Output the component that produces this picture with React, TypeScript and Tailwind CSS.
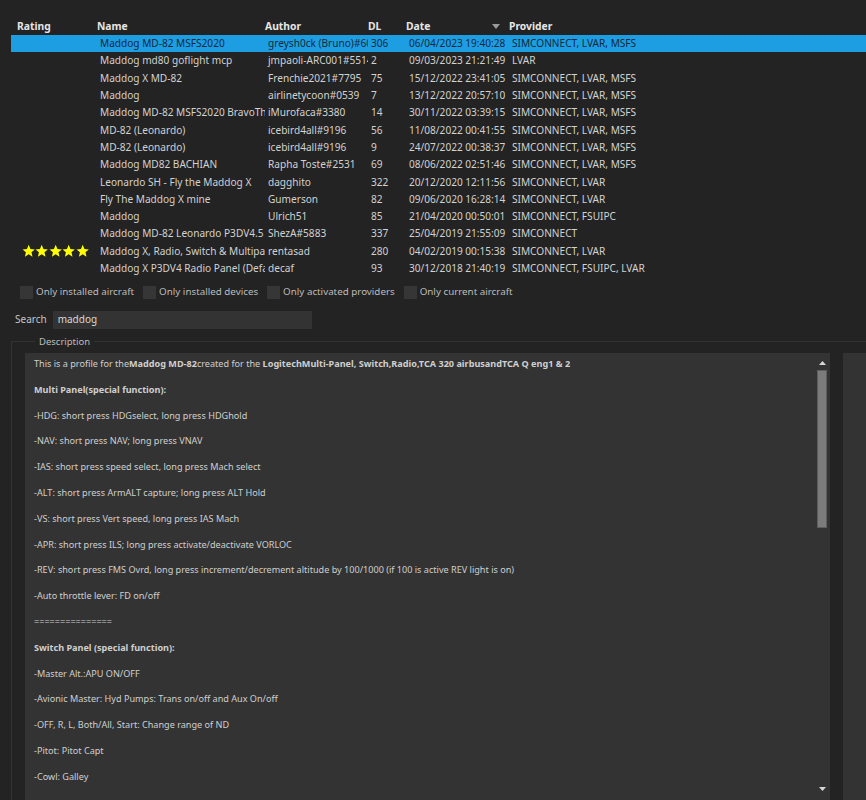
import React from "react";

type Row = {
  name: string;
  author: string;
  dl: string;
  date: string;
  provider: string;
  stars?: boolean;
};

const rows: Row[] = [
  { name: "Maddog MD-82 MSFS2020", author: "greysh0ck (Bruno)#6054", dl: "306", date: "06/04/2023 19:40:28", provider: "SIMCONNECT, LVAR, MSFS" },
  { name: "Maddog md80 goflight mcp", author: "jmpaoli-ARC001#5514", dl: "2", date: "09/03/2023 21:21:49", provider: "LVAR" },
  { name: "Maddog X MD-82", author: "Frenchie2021#7795", dl: "75", date: "15/12/2022 23:41:05", provider: "SIMCONNECT, LVAR, MSFS" },
  { name: "Maddog", author: "airlinetycoon#0539", dl: "7", date: "13/12/2022 20:57:10", provider: "SIMCONNECT, LVAR, MSFS" },
  { name: "Maddog MD-82 MSFS2020 BravoThrottle", author: "iMurofaca#3380", dl: "14", date: "30/11/2022 03:39:15", provider: "SIMCONNECT, LVAR, MSFS" },
  { name: "MD-82 (Leonardo)", author: "icebird4all#9196", dl: "56", date: "11/08/2022 00:41:55", provider: "SIMCONNECT, LVAR, MSFS" },
  { name: "MD-82 (Leonardo)", author: "icebird4all#9196", dl: "9", date: "24/07/2022 00:38:37", provider: "SIMCONNECT, LVAR, MSFS" },
  { name: "Maddog MD82 BACHIAN", author: "Rapha Toste#2531", dl: "69", date: "08/06/2022 02:51:46", provider: "SIMCONNECT, LVAR, MSFS" },
  { name: "Leonardo SH - Fly the Maddog X", author: "dagghito", dl: "322", date: "20/12/2020 12:11:56", provider: "SIMCONNECT, LVAR" },
  { name: "Fly The Maddog X mine", author: "Gumerson", dl: "82", date: "09/06/2020 16:28:14", provider: "SIMCONNECT, LVAR" },
  { name: "Maddog", author: "Ulrich51", dl: "85", date: "21/04/2020 00:50:01", provider: "SIMCONNECT, FSUIPC" },
  { name: "Maddog MD-82 Leonardo P3DV4.5", author: "ShezA#5883", dl: "337", date: "25/04/2019 21:55:09", provider: "SIMCONNECT" },
  { name: "Maddog X, Radio, Switch & Multipanel", author: "rentasad", dl: "280", date: "04/02/2019 00:15:38", provider: "SIMCONNECT, LVAR", stars: true },
  { name: "Maddog X P3DV4 Radio Panel (Default)", author: "decaf", dl: "93", date: "30/12/2018 21:40:19", provider: "SIMCONNECT, FSUIPC, LVAR" },
];

const lines: { text: React.ReactNode; bold?: boolean }[] = [
  {
    text: (
      <>
        This is a profile for the<b>Maddog MD-82</b>created for the{" "}
        <b>LogitechMulti-Panel, Switch,Radio,TCA 320 airbusandTCA Q eng1 &amp; 2</b>
      </>
    ),
  },
  { text: "Multi Panel(special function):", bold: true },
  { text: "-HDG: short press HDGselect, long press HDGhold" },
  { text: "-NAV: short press NAV; long press VNAV" },
  { text: "-IAS: short press speed select, long press Mach select" },
  { text: "-ALT: short press ArmALT capture; long press ALT Hold" },
  { text: "-VS: short press Vert speed, long press IAS Mach" },
  { text: "-APR: short press ILS; long press activate/deactivate VORLOC" },
  { text: "-REV: short press FMS Ovrd, long press increment/decrement altitude by 100/1000 (if 100 is active REV light is on)" },
  { text: "-Auto throttle lever: FD on/off" },
  { text: "===============" },
  { text: "Switch Panel (special function):", bold: true },
  { text: "-Master Alt.:APU ON/OFF" },
  { text: "-Avionic Master: Hyd Pumps: Trans on/off and Aux On/off" },
  { text: "-OFF, R, L, Both/All, Start: Change range of ND" },
  { text: "-Pitot: Pitot Capt" },
  { text: "-Cowl: Galley" },
];

const cols = "grid grid-cols-[86px_168px_103px_38px_103px_1fr]";

function Star() {
  return (
    <svg width="13.4" height="14" viewBox="0 0 24 25">
      <polygon
        points="12,1.5 15.1,8.9 23,9.6 17,14.8 18.8,22.6 12,18.5 5.2,22.6 7,14.8 1,9.6 8.9,8.9"
        fill="#ffff00"
      />
    </svg>
  );
}

function Cell({ children }: { children: React.ReactNode }) {
  return <div className="overflow-hidden whitespace-nowrap pl-[3px] pr-[5px]">{children}</div>;
}

function Check({ label }: { label: string }) {
  return (
    <label className="flex items-center gap-[3px]">
      <span className="h-[13px] w-[13px] bg-[#363636]" />
      <span>{label}</span>
    </label>
  );
}

export default function App() {
  return (
    <div
      className="flex h-[800px] w-full flex-col overflow-hidden bg-[#232323] text-[10px] text-[#d2d2d2]"
      style={{ fontFamily: '"Noto Sans", "Open Sans", sans-serif' }}
    >
      {/* profile list */}
      <div className="pl-[11px] pt-[18px]">
        <div className={`${cols} h-[17px] items-center text-[10.3px] font-bold text-[#e6e6e6]`}>
          <div className="pl-[6px]">Rating</div>
          <div>Name</div>
          <div>Author</div>
          <div>DL</div>
          <div className="relative">
            Date
            <svg className="absolute right-[9px] top-[5px]" width="8" height="5" viewBox="0 0 8 5">
              <polygon points="0,0 8,0 4,5" fill="#9a9a9a" />
            </svg>
          </div>
          <div>Provider</div>
        </div>
        {rows.map((r, idx) => (
          <div
            key={idx}
            className={`${cols} h-[17.3px] items-center text-[10.1px] leading-[17px] ${
              idx === 0 ? "bg-[#1d9ee2] text-[#14283a]" : ""
            }`}
          >
            <div className="flex items-center pl-[11px]">
              {r.stars && (
                <>
                  <Star />
                  <Star />
                  <Star />
                  <Star />
                  <Star />
                </>
              )}
            </div>
            <Cell>{r.name}</Cell>
            <Cell>{r.author}</Cell>
            <Cell>{r.dl}</Cell>
            <Cell>{r.date}</Cell>
            <Cell>{r.provider}</Cell>
          </div>
        ))}
      </div>

      {/* filters */}
      <div className="mt-[8px] flex items-center gap-[9px] pl-[20px] text-[9.8px] text-[#bcbcbc]">
        <Check label="Only installed aircraft" />
        <Check label="Only installed devices" />
        <Check label="Only activated providers" />
        <Check label="Only current aircraft" />
      </div>

      {/* search */}
      <div className="mt-[11px] flex items-center gap-[6px] pl-[15px] text-[#c4c4c4]">
        <span>Search</span>
        <div className="flex h-[18px] w-[259px] items-center bg-[#333333] pl-[5px] text-[#d8d8d8]">maddog</div>
      </div>

      {/* description */}
      <fieldset className="mt-[6px] ml-[11px] min-h-0 flex-1 border-l border-t border-[#333333] pl-[13px]">
        <legend className="ml-[10px] px-[4px] text-[9.5px] text-[#bdbdbd]">Description</legend>
        <div className="mt-[4px] flex h-full gap-[13px]">
          <div className="relative flex h-full w-[805px] shrink-0 bg-[#333333]">
            <div className="flex-1 pl-[9px] pt-[4px] text-[9.1px] text-[#cfcfcf]">
              {lines.map((l, i) => (
                <p key={i} className={`mb-[12.8px] whitespace-nowrap leading-[13px] ${l.bold ? "font-bold" : ""}`}>
                  {l.text}
                </p>
              ))}
            </div>
            <div className="flex w-[16px] flex-col items-center pt-[8px]">
              <svg width="7" height="4" viewBox="0 0 7 4">
                <polygon points="0,4 7,4 3.5,0" fill="#d8d8d8" />
              </svg>
              <div className="mt-[5px] h-[158px] w-[10px] border border-[#5e5e5e] bg-[#7b7b7b]" />
              <div className="flex-1" />
              <svg className="mb-[13px]" width="7" height="4" viewBox="0 0 7 4">
                <polygon points="0,0 7,0 3.5,4" fill="#d8d8d8" />
              </svg>
            </div>
          </div>
          <div className="h-full flex-1 bg-[#333333]" />
        </div>
      </fieldset>
    </div>
  );
}
